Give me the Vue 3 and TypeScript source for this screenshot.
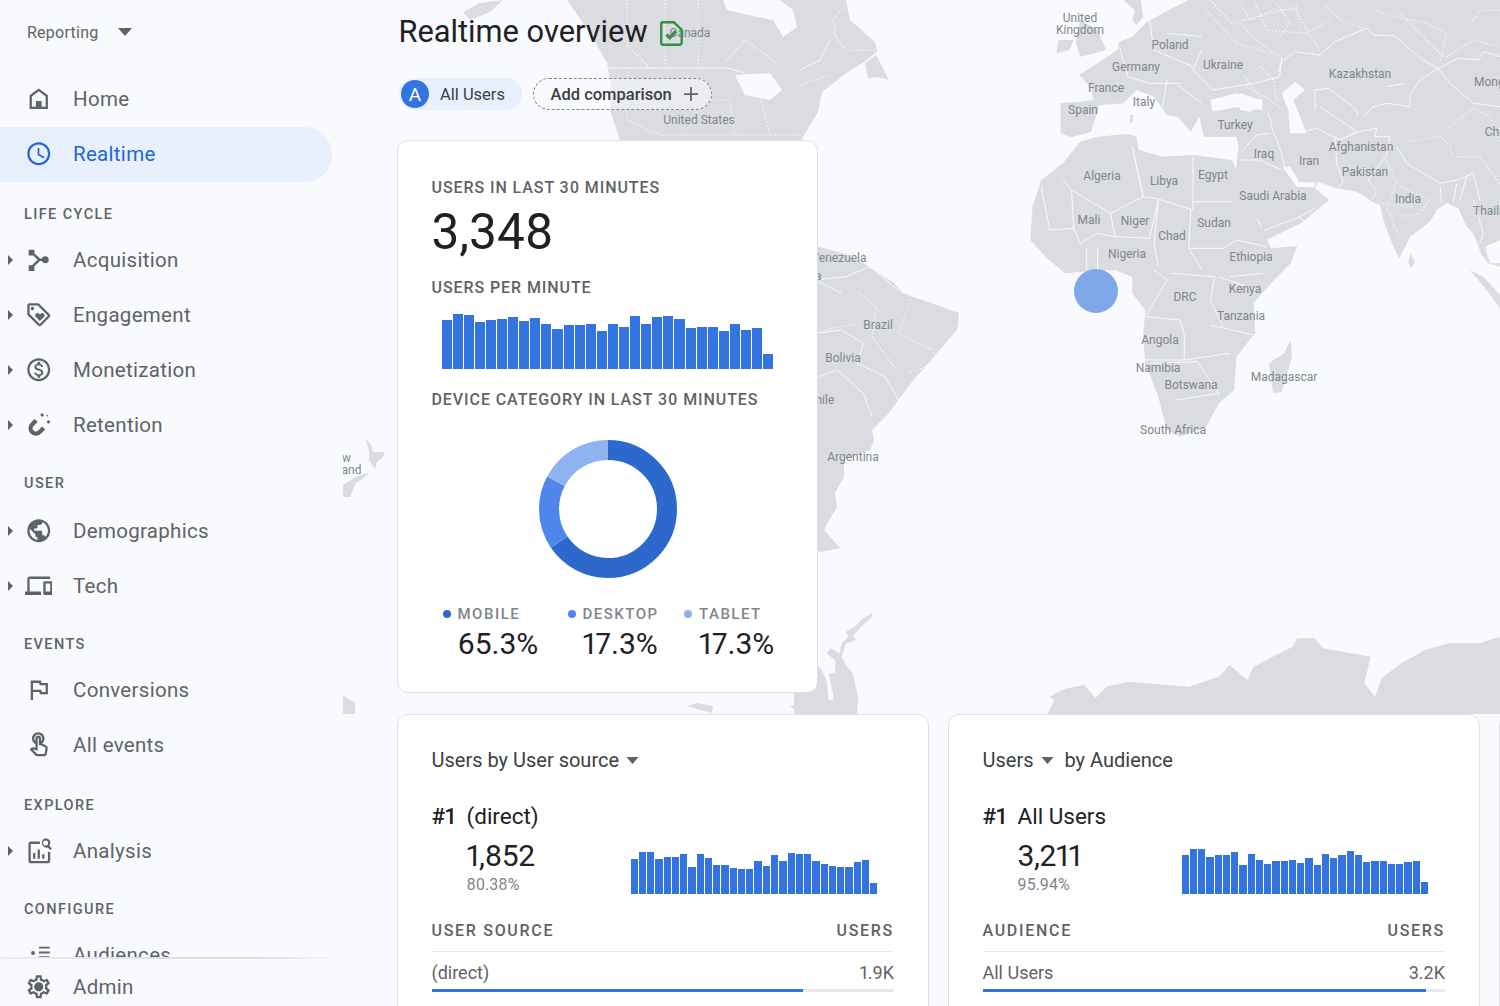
<script setup lang="ts">
type P = [number, number];
const z4 = (pts: P[]) => pts.map(([x, y]) => `${(x * 0.4337 + 477).toFixed(1)},${(y / 3).toFixed(1)}`).join(' ');
const z8 = (pts: P[]) => pts.map(([x, y]) => `${(x * 0.4337 + 477).toFixed(1)},${(y / 3 + 440).toFixed(1)}`).join(' ');
const z9 = (pts: P[]) => pts.map(([x, y]) => `${(x / 3 + 897).toFixed(1)},${(y / 3).toFixed(1)}`).join(' ');
const pg = (pts: P[]) => pts.map(([x, y]) => `${x - 343},${y}`).join(' ');

const land: string[] = [
  // North America
  pg([[567,0],[590,33],[607,63],[611,85],[610,110],[620,140],[640,190],[670,225],[705,262],[745,282],[768,262],[740,232],[745,212],[775,200],[795,170],[803,137],[818,112],[822,92],[848,72],[864,62],[877,52],[875,42],[850,20],[846,0],[780,0],[793,10],[797,27],[783,37],[773,20],[757,17],[727,10],[723,0]]),
  pg([[865,63],[876,55],[889,80],[878,77],[868,78]]),
  pg([[463,12],[480,3],[503,0],[490,12],[470,20]]),
  // South America
  pg([[790,250],[820,247],[842,253],[863,263],[894,283],[902,293],[928,302],[959,313],[957,330],[937,353],[911,383],[889,413],[872,430],[874,440],[870,450],[844,460],[844,477],[835,493],[837,507],[829,520],[824,530],[840,548],[820,552],[800,540],[790,450],[800,400],[770,320],[770,285]]),
  // Africa
  z4([[600,425],[640,410],[710,402],[730,410],[735,450],[790,470],[860,465],[950,480],[960,510],[985,600],[1020,690],[1040,745],[1100,738],[1085,790],[1040,850],[1000,910],[1003,1000],[960,1070],[955,1170],[920,1210],[890,1280],[830,1310],[800,1290],[780,1190],[750,1090],[745,1010],[750,930],[720,880],[720,830],[680,810],[610,815],[565,820],[520,770],[485,720],[490,620],[510,540],[560,490]]),
  // Eurasia
  z4([[555,310],[600,305],[630,300],[625,265],[598,225],[640,190],[685,150],[690,125],[720,110],[750,70],[790,40],[850,0]]) + ' ' +
    z9([[780,0],[780,800],[745,790],[725,765],[700,700],[680,680],[655,625],[620,610],[590,630],[570,665],[510,710],[478,775],[458,735],[430,660],[420,615],[395,605],[375,590],[350,575],[290,565],[235,545],[225,565],[268,600],[185,668],[75,722],[60,665],[15,615],[0,590]]) + ' ' +
    z4([[958,525],[965,440],[960,410],[885,410],[875,350],[855,395],[825,350],[800,345],[770,290],[730,270],[700,310],[645,315],[625,395],[580,412],[555,400]]),
  z4([[700,0],[740,0],[745,50],[730,75],[720,60],[725,30]]),
  z4([[600,60],[640,90],[660,150],[600,170],[590,130]]),
  z4([[550,120],[585,120],[575,150],[545,160]]),
  z4([[1085,1020],[1088,1070],[1065,1175],[1045,1180],[1035,1090],[1070,1060]]),
  z9([[512,760],[525,785],[515,803],[505,790]]),
  z9([[690,810],[730,830],[780,885],[780,925],[740,870]]),
  z4([[715,345],[722,345],[720,370],[714,368]]),
  // New Zealand
  pg([[365,438],[371,445],[373,452],[385,452],[382,458],[377,462],[375,469],[371,463],[369,460],[369,450]]),
  pg([[370,472],[361,480],[356,483],[350,497],[343,497],[343,485],[356,477]]),
  pg([[343,695],[355,703],[355,714],[343,714]]),
  // Antarctica
  z8([[525,822],[540,780],[530,770],[550,755],[570,745],[610,735],[635,775],[660,740],[710,725],[750,730],[850,740],[920,710],[945,675],[985,720],[1000,680],[1060,640],[1090,620],[1100,595],[1140,595],[1160,625],[1270,650],[1255,730],[1280,770],[1295,715],[1340,670],[1395,630],[1450,610],[1520,610],[1568,590],[1568,822]]),
  z8([[120,520],[100,535],[80,560],[60,575],[65,590],[50,610],[45,640],[25,625],[15,640],[35,660],[35,700],[20,700],[30,760],[32,822],[85,822],[88,770],[75,700],[60,675],[50,650],[60,610],[85,600],[75,590],[95,560],[120,530]]),
  z8([[-60,680],[0,680],[15,720],[20,780],[0,822],[-60,822]]),
  pg([[687,706],[697,703],[713,706],[712,713],[700,710]]),
  pg([[790,706],[812,700],[843,700],[843,714],[800,714]]),
];

const water: string[] = [
  z9([[0,280],[35,290],[60,320],[30,335],[0,330]]),
  z4([[900,300],[960,280],[1020,300],[1020,330],[960,322],[905,335]]),
  z9([[125,280],[165,245],[195,270],[160,300],[200,400],[150,400],[145,330]]),
  z9([[130,505],[150,498],[178,545],[228,548],[222,562],[170,560]]),
  z9([[735,740],[780,720],[780,790],[750,790]]),
  pg([[735,75],[770,73],[782,90],[770,100],[745,95]]),
];

const lines: string[] = [
  z4([[560,540],[580,570],[670,640],[745,590],[720,440]]),
  z4([[725,470],[745,590],[775,595],[860,630],[860,470]]),
  z4([[860,605],[950,605]]),
  z4([[855,630],[850,745],[880,810]]),
  z4([[580,570],[585,685],[530,690],[510,560]]),
  z4([[670,640],[680,710],[760,715],[780,600]]),
  z4([[780,600],[770,730],[780,800]]),
  z4([[585,685],[600,730],[640,700],[680,710]]),
  z4([[810,820],[910,830],[900,900],[930,980]]),
  z4([[770,810],[800,840],[750,950]]),
  z4([[750,950],[830,960],[840,1005],[840,1080],[750,1080]]),
  z4([[920,830],[1005,870]]),
  z4([[900,975],[1000,1005]]),
  z4([[850,745],[930,745],[960,720],[1030,740]]),
  z4([[945,830],[1020,820]]),
  z4([[760,1090],[870,1085],[920,1180],[820,1200]]),
  z4([[840,1080],[945,1060]]),
  z4([[615,745],[615,810]]), z4([[640,745],[640,810]]),
  z4([[880,150],[860,210],[905,270],[1000,250],[1060,230],[1065,170]]),
  z4([[760,60],[770,150],[860,200]]),
  z4([[690,140],[710,230],[760,250],[830,250]]),
  z4([[800,100],[880,110]]),
  z4([[800,240],[790,320]]),
  z4([[825,255],[880,310]]),
  // Central Asia and the Middle East
  z9([[115,215],[125,185],[165,155],[240,165],[285,125],[380,85],[400,105],[465,108],[540,175],[595,205],[540,240],[510,285],[510,320],[440,310],[400,320],[370,350]]),
  z9([[225,330],[225,270],[265,265],[340,320],[355,345]]),
  z9([[240,320],[350,395],[300,420],[230,385],[190,395]]),
  z9([[595,205],[655,175],[715,180],[730,155],[780,170]]),
  z9([[595,205],[630,250],[700,310],[780,320]]),
  z9([[90,370],[125,460],[135,510]]),
  z9([[85,340],[95,370]]),
  z9([[285,410],[290,490],[310,545],[295,565]]),
  z9([[300,420],[355,395],[410,385],[405,410],[450,410],[440,465],[385,540],[410,575],[395,600]]),
  z9([[0,460],[50,405],[90,400]]),
  z9([[0,480],[60,480],[125,510]]),
  z9([[75,690],[180,650],[195,670]]),
  z9([[180,650],[225,625]]),
  z9([[470,440],[500,490],[600,550],[650,540],[700,520],[720,600]]),
  z9([[600,560],[605,610]]),
  z9([[650,550],[640,610]]),
  z9([[680,530],[660,600]]),
  z9([[700,600],[730,700],[720,730]]),
  z9([[440,260],[495,250]]),
  // Americas
  z4([[50,880],[-10,840],[60,830],[115,800],[180,870]]),
  z4([[-10,1000],[50,990],[100,1030],[85,1090],[150,1130],[190,1220]]),
  z4([[0,1130],[40,1110],[100,1180],[120,1250]]),
  pg([[607,68],[727,68],[745,73]]),
  pg([[800,70],[820,60],[830,40]]),
];

const dots: string[] = [
  pg([[627,0],[627,45],[650,68]]),
  pg([[665,0],[665,68]]), pg([[698,0],[698,68]]),
  pg([[725,62],[745,40],[775,62]]),
  pg([[627,68],[627,120],[660,135],[800,135]]),
  pg([[665,100],[730,100],[735,135]]),
  pg([[760,95],[770,135]]),
  pg([[800,85],[830,75]]),
  z4([[30,100],[60,150],[130,150]]),
  z4([[60,10],[30,60],[40,130]]),
  z4([[890,30],[960,130],[1040,160]]),
  z4([[980,230],[1020,300]]),
  z4([[90,880],[130,920],[120,1010],[170,1100]]),
  z4([[210,900],[180,1000],[260,1050],[270,1090],[200,1120]]),
  z4([[10,990],[90,970]]),
  z4([[900,0],[950,70],[1010,50],[1100,20]]),
  z4([[1000,0],[1030,90],[1120,100],[1180,60]]),
  z9([[0,70],[60,130],[120,170]]),
  z9([[170,30],[200,90],[240,150]]),
  z9([[260,20],[300,60],[370,85]]),
  z9([[400,30],[470,50],[560,70],[620,100],[600,190]]),
  z9([[700,60],[720,30],[780,30]]),
  z9([[620,170],[700,120],[780,140]]),
  z9([[495,425],[600,410],[630,440],[640,470],[720,470],[750,510],[780,550]]),
  z9([[630,380],[700,325],[750,350],[780,430]]),
  z9([[440,480],[470,550],[440,620],[480,720]]),
  z9([[480,560],[570,600],[540,640],[480,650]]),
  z9([[420,610],[520,620]]),
  z9([[0,10],[30,60],[100,30],[170,30],[180,80]]),
  z9([[60,200],[100,240],[110,300]]),
  z9([[20,260],[90,300],[130,330]]),
  z9([[110,10],[150,70],[120,110]]),
  z9([[480,40],[560,120],[610,170]]),
];

const labels: { t: string; x: number; y: number }[] = [
  { t: 'Canada', x: 690, y: 33 }, { t: 'United States', x: 699, y: 120 }, { t: 'Mexico', x: 695, y: 194 },
  { t: 'Venezuela', x: 839, y: 258 }, { t: 'Colombia', x: 796, y: 276 }, { t: 'Peru', x: 797, y: 334 },
  { t: 'Brazil', x: 878, y: 325 }, { t: 'Bolivia', x: 843, y: 358 }, { t: 'Chile', x: 821, y: 400 },
  { t: 'Argentina', x: 853, y: 457 }, { t: 'United', x: 1080, y: 18 }, { t: 'Kingdom', x: 1080, y: 30 },
  { t: 'Poland', x: 1170, y: 45 }, { t: 'Germany', x: 1136, y: 67 }, { t: 'Ukraine', x: 1223, y: 65 },
  { t: 'Kazakhstan', x: 1360, y: 74 }, { t: 'France', x: 1106, y: 88 }, { t: 'Italy', x: 1144, y: 102 },
  { t: 'Spain', x: 1083, y: 110 }, { t: 'Turkey', x: 1235, y: 125 }, { t: 'Iraq', x: 1264, y: 154 },
  { t: 'Iran', x: 1309, y: 161 }, { t: 'Afghanistan', x: 1361, y: 147 }, { t: 'Pakistan', x: 1365, y: 172 },
  { t: 'Algeria', x: 1102, y: 176 }, { t: 'Libya', x: 1164, y: 181 }, { t: 'Egypt', x: 1213, y: 175 },
  { t: 'Saudi Arabia', x: 1273, y: 196 }, { t: 'India', x: 1408, y: 199 }, { t: 'Thailand', x: 1496, y: 211 },
  { t: 'Mali', x: 1089, y: 220 }, { t: 'Niger', x: 1135, y: 221 }, { t: 'Chad', x: 1172, y: 236 },
  { t: 'Sudan', x: 1214, y: 223 }, { t: 'Nigeria', x: 1127, y: 254 }, { t: 'Ethiopia', x: 1251, y: 257 },
  { t: 'Kenya', x: 1245, y: 289 }, { t: 'DRC', x: 1185, y: 297 }, { t: 'Tanzania', x: 1241, y: 316 },
  { t: 'Angola', x: 1160, y: 340 }, { t: 'Namibia', x: 1158, y: 368 }, { t: 'Botswana', x: 1191, y: 385 },
  { t: 'Madagascar', x: 1284, y: 377 }, { t: 'South Africa', x: 1173, y: 430 }, { t: 'Mongolia', x: 1499, y: 82 },
  { t: 'China', x: 1500, y: 132 }, { t: 'New', x: 339, y: 458 }, { t: 'Zealand', x: 340, y: 470 },
];

type NavItem = { label: string; path: string; caret?: boolean; active?: boolean };
type Section = { title?: string; kind?: string; items: NavItem[] };

const P = {
  home: 'M12 3L4 9v12h16V9l-8-6zm6 16H6v-9l6-4.500 6 4.500v9zM9.500 14h5v5h-5z',
  clock: 'M11.99 2C6.47 2 2 6.48 2 12s4.47 10 9.99 10C17.52 22 22 17.52 22 12S17.52 2 11.99 2zM12 20c-4.42 0-8-3.58-8-8s3.58-8 8-8 8 3.58 8 8-3.58 8-8 8zm.5-13H11v6l5.25 3.15.75-1.23-4.5-2.67z',
  acq: 'M3.2 3.2h5v5h-5zM3.2 16.8h5v5h-5zM17.7 9a3 3 0 1 1 0 6 3 3 0 0 1 0-6zM6.9 5.2l6.2 5.8h3.4v2h-3.4l-6.2 5.8-1.3-1.5 5.4-5.3-5.4-5.3z',
  eng: 'M21.41 11.41l-8.83-8.83C12.21 2.21 11.7 2 11.17 2H4c-1.1 0-2 .9-2 2v7.17c0 .53.21 1.04.59 1.41l8.83 8.83c.78.78 2.05.78 2.83 0l7.17-7.17c.78-.78.78-2.04-.01-2.83zM12.83 20L4 11.17V4h7.17L20 12.83 12.83 20zM6.5 5a1.5 1.5 0 1 0 0 3 1.5 1.5 0 0 0 0-3zM8.9 12.55c0 .57.23 1.07.6 1.45l3.5 3.5 3.5-3.5c.37-.37.6-.89.6-1.45 0-1.13-.92-2.05-2.05-2.05-.57 0-1.08.23-1.45.6l-.6.6-.6-.59c-.37-.38-.89-.61-1.45-.61-1.13 0-2.05.92-2.05 2.05z',
  mon: 'M12 2C6.48 2 2 6.48 2 12s4.48 10 10 10 10-4.48 10-10S17.52 2 12 2zm0 18c-4.41 0-8-3.59-8-8s3.59-8 8-8 8 3.59 8 8-3.59 8-8 8zm.31-8.86c-1.77-.45-2.34-.94-2.34-1.67 0-.84.79-1.43 2.1-1.43 1.38 0 1.9.66 1.94 1.64h1.71c-.05-1.34-.87-2.57-2.49-2.97V5H10.9v1.69c-1.51.32-2.72 1.3-2.72 2.81 0 1.79 1.49 2.69 3.66 3.21 1.95.46 2.34 1.15 2.34 1.87 0 .53-.39 1.39-2.1 1.39-1.6 0-2.23-.72-2.32-1.64H8.04c.1 1.7 1.36 2.66 2.86 2.97V19h2.34v-1.67c1.52-.29 2.72-1.16 2.73-2.77-.01-2.2-1.9-2.96-3.66-3.42z',
  ret: 'M8.4 6.9L4.9 10.4A6.5 6.5 0 0 0 14.1 19.6L17.6 16.1 15 13.5 11.5 17A2.8 2.8 0 0 1 7.5 13L11 9.500zM15 1.800l1.700 1.700-1.700 1.700-1.700-1.700zM20.500 7.800l1.700 1.700-1.700 1.700-1.700-1.700zM19.300 3.200l.9.900-.9.900-.9-.900z',
  demo: 'M12 2C6.48 2 2 6.48 2 12s4.48 10 10 10 10-4.48 10-10S17.52 2 12 2zm-1 17.93c-3.95-.49-7-3.85-7-7.93 0-.62.08-1.21.21-1.79L9 15v1c0 1.1.9 2 2 2v1.93zm6.9-2.54c-.26-.81-1-1.39-1.9-1.39h-1v-3c0-.55-.45-1-1-1H8v-2h2c.55 0 1-.45 1-1V7h2c1.1 0 2-.9 2-2v-.41c2.93 1.19 5 4.06 5 7.41 0 2.08-.8 3.97-2.1 5.39z',
  tech: 'M4 6h18V4H4c-1.1 0-2 .9-2 2v11H0v3h14v-3H4V6zm19 2h-6c-.55 0-1 .45-1 1v10c0 .55.45 1 1 1h6c.55 0 1-.45 1-1V9c0-.55-.45-1-1-1zm-1 9h-4v-7h4v7z',
  flag: 'M12.36 6l.4 2H18v6h-3.36l-.4-2H7V6h5.36M14 4H5v17h2v-7h5.6l.4 2h7V6h-5.6L14 4z',
  touch: 'M18.19 12.44l-3.24-1.62c1.29-1 2.12-2.56 2.12-4.32 0-3.03-2.47-5.5-5.5-5.5s-5.5 2.47-5.5 5.5c0 2.13 1.22 3.98 3 4.89v3.26c-2.15-.46-2.02-.44-2.26-.44-.53 0-1.03.21-1.41.59L4 16.22l5.09 5.09C9.52 21.75 10.12 22 10.74 22h6.3c.98 0 1.81-.7 1.97-1.67l.8-4.71c.22-1.3-.43-2.58-1.62-3.18zm-.35 2.85l-.8 4.71h-6.3c-.09 0-.17-.04-.24-.1l-3.68-3.68 4.25.89V6.5c0-.28.22-.5.5-.5s.5.22.5.5v6h1.76l3.46 1.73c.4.2.62.63.55 1.06zM8.07 6.5c0-1.93 1.57-3.5 3.5-3.5s3.5 1.57 3.5 3.5c0 .95-.38 1.81-1 2.44V6.5c0-1.38-1.12-2.5-2.5-2.5s-2.5 1.12-2.5 2.5v2.44c-.62-.63-1-1.49-1-2.44z',
  analysis: 'M13 4H5a2 2 0 0 0-2 2v15a2 2 0 0 0 2 2h15a2 2 0 0 0 2-2v-8h-2v8H5V6h8zM7 14h2v5H7zM11 11h2v8h-2zM15 15h2v4h-2zM18 1a4.2 4.2 0 0 1 3.3 6.8l2.2 2.2-1.4 1.4-2.2-2.2A4.2 4.2 0 1 1 18 1zm0 2a2.2 2.2 0 1 0 0 4.4A2.2 2.2 0 0 0 18 3z',
  aud: 'M7 8.800a1.700 1.700 0 1 1 0 3.400 1.700 1.700 0 0 1 0-3.400zM12.200 5h9.400v1.600h-9.400zM12.200 9.200h9.400v1.600h-9.400zM12.200 13.400h9.400v1.600h-9.400z',
  gear: 'M19.43 12.98c.04-.32.07-.64.07-.98 0-.34-.03-.66-.07-.98l2.11-1.65c.19-.15.24-.42.12-.64l-2-3.46c-.09-.16-.26-.25-.44-.25-.06 0-.12.01-.17.03l-2.49 1c-.52-.4-1.08-.73-1.69-.98l-.38-2.65C14.46 2.18 14.25 2 14 2h-4c-.25 0-.46.18-.49.42l-.38 2.65c-.61.25-1.17.59-1.69.98l-2.49-1c-.06-.02-.12-.03-.18-.03-.17 0-.34.09-.43.25l-2 3.46c-.13.22-.07.49.12.64l2.11 1.65c-.04.32-.07.65-.07.98 0 .33.03.66.07.98l-2.11 1.65c-.19.15-.24.42-.12.64l2 3.46c.09.16.26.25.44.25.06 0 .12-.01.17-.03l2.49-1c.52.4 1.08.73 1.69.98l.38 2.65c.03.24.24.42.49.42h4c.25 0 .46-.18.49-.42l.38-2.65c.61-.25 1.17-.59 1.69-.98l2.49 1c.06.02.12.03.18.03.17 0 .34-.09.43-.25l2-3.46c.12-.22.07-.49-.12-.64l-2.11-1.65zm-1.98-1.71c.04.31.05.52.05.73 0 .21-.02.43-.05.73l-.14 1.13.89.7 1.08.84-.7 1.21-1.27-.51-1.04-.42-.9.68c-.43.32-.84.56-1.25.73l-1.06.43-.16 1.13-.2 1.35h-1.4l-.19-1.35-.16-1.13-1.06-.43c-.43-.18-.83-.41-1.23-.71l-.91-.7-1.06.43-1.27.51-.7-1.21 1.08-.84.89-.7-.14-1.13c-.03-.31-.05-.54-.05-.74s.02-.43.05-.73l.14-1.13-.89-.7-1.08-.84.7-1.21 1.27.51 1.04.42.9-.68c.43-.32.84-.56 1.25-.73l1.06-.43.16-1.13.2-1.35h1.39l.19 1.35.16 1.13 1.06.43c.43.18.83.41 1.23.71l.91.7 1.06-.43 1.27-.51.7 1.21-1.07.85-.89.7.14 1.13zM12 8c-2.21 0-4 1.79-4 4s1.79 4 4 4 4-1.79 4-4-1.79-4-4-4z',
};

const sections: Section[] = [
  { items: [{ label: 'Home', path: P.home }, { label: 'Realtime', path: P.clock, active: true }] },
  { title: 'LIFE CYCLE', kind: 'h-a', items: [
    { label: 'Acquisition', path: P.acq, caret: true }, { label: 'Engagement', path: P.eng, caret: true },
    { label: 'Monetization', path: P.mon, caret: true }, { label: 'Retention', path: P.ret, caret: true } ] },
  { title: 'USER', kind: 'h-b', items: [{ label: 'Demographics', path: P.demo, caret: true }, { label: 'Tech', path: P.tech, caret: true }] },
  { title: 'EVENTS', kind: 'h-c', items: [{ label: 'Conversions', path: P.flag }, { label: 'All events', path: P.touch }] },
  { title: 'EXPLORE', kind: 'h-a', items: [{ label: 'Analysis', path: P.analysis, caret: true }] },
  { title: 'CONFIGURE', kind: 'h-c', items: [{ label: 'Audiences', path: P.aud }] },
];

const minuteBars = [49,55,54,47,49,50,52,48,51,45,40,44,44,45,38,45,42,53,45,52,53,50,41,42,42,38,45,39,41,15];

const C = 2 * Math.PI * 59;
const donut = [
  { color: '#2d69cd', pct: 65.4, from: 0 },
  { color: '#4f86ec', pct: 17.3, from: 65.4 },
  { color: '#8fb2f1', pct: 17.3, from: 82.7 },
];
const legend = [
  { name: 'MOBILE', value: '65.3%', color: '#2d69cd' },
  { name: 'DESKTOP', value: '17.3%', color: '#4f86ec' },
  { name: 'TABLET', value: '17.3%', color: '#8fb2f1' },
];

const cards = [
  { kind: 'source', rank: '(direct)', value: '1,852', pct: '80.38%', col: 'USER SOURCE', row: '(direct)', short: '1.9K', fill: 80.3,
    width: 247,
    bars: [35,42,42,35,37,37,40,27,40,36,29,29,26,25,25,33,28,39,33,41,40,40,33,30,28,27,27,32,34,11] },
  { kind: 'audience', rank: 'All Users', value: '3,211', pct: '95.94%', col: 'AUDIENCE', row: 'All Users', short: '3.2K', fill: 95.9,
    width: 246.5,
    bars: [39,45,45,37,39,39,42,29,40,34,30,33,33,34,31,36,29,40,36,39,43,39,32,33,33,30,30,32,33,12] },
];
</script>

<template>
  <div class="app">
    <aside class="sidebar">
      <div class="reporting">
        <span>Reporting</span>
        <svg class="rep-caret" viewBox="0 0 14 8"><path d="M0 0h14L7 8z" /></svg>
      </div>
      <div class="nav">
        <template v-for="s in sections" :key="s.title ?? 'top'">
          <div v-if="s.title" class="heading" :class="s.kind"><span>{{ s.title }}</span></div>
          <div v-for="i in s.items" :key="i.label" class="item" :class="{ active: i.active }">
            <span class="slot">
              <svg v-if="i.caret" class="expand" viewBox="0 0 5 10"><path d="M0 0l5 5-5 5z" /></svg>
            </span>
            <svg class="icon" viewBox="0 0 24 24"><path :d="i.path" /></svg>
            <span class="text">{{ i.label }}</span>
          </div>
        </template>
      </div>
      <div class="foot">
        <div class="item">
          <span class="slot"></span>
          <svg class="icon" viewBox="0 0 24 24"><path :d="P.gear" /><circle cx="12" cy="12" r="2.4" /></svg>
          <span class="text">Admin</span>
        </div>
      </div>
    </aside>

    <main class="main">
      <svg class="map" viewBox="0 0 1157 714">
        <polygon v-for="(p, i) in land" :key="'l' + i" :points="p" class="land" />
        <polygon v-for="(p, i) in water" :key="'w' + i" :points="p" class="water" />
        <polyline v-for="(p, i) in lines" :key="'b' + i" :points="p" class="border" />
        <polyline v-for="(p, i) in dots" :key="'d' + i" :points="p" class="dot-line" />
        <text v-for="l in labels" :key="l.t" :x="l.x - 343" :y="l.y + 4" class="map-label">{{ l.t }}</text>
        <circle cx="753" cy="291" r="22" class="bubble" />
      </svg>

      <div class="content">
        <div class="title-row">
          <h1>Realtime overview</h1>
          <svg class="doc" viewBox="0 0 23 25">
            <path d="M2.500 1.200h11.300l7.900 7.600v12.500a2.500 2.500 0 0 1-2.500 2.500H2.500A1.500 1.500 0 0 1 1.200 22.300V2.700A1.500 1.500 0 0 1 2.500 1.200z" fill="none" stroke="#2f9246" stroke-width="2.400" />
            <path d="M6.500 13.500l3.200 3.200 6.300-6.500" fill="none" stroke="#2f9246" stroke-width="3.200" />
          </svg>
        </div>
        <div class="chips">
          <div class="chip-user">
            <span class="avatar">A</span>
            <span>All Users</span>
          </div>
          <div class="chip-add">
            <span>Add comparison</span>
            <svg viewBox="0 0 16 16"><path d="M7 0h2v7h7v2H9v7H7V9H0V7h7z" /></svg>
          </div>
        </div>

        <section class="card overview">
          <div class="label">USERS IN LAST 30 MINUTES</div>
          <div class="big">3,348</div>
          <div class="label per-minute">USERS PER MINUTE</div>
          <div class="minute-bars">
            <span v-for="(b, i) in minuteBars" :key="i" :style="{ height: b + 'px' }"></span>
          </div>
          <div class="label device">DEVICE CATEGORY IN LAST 30 MINUTES</div>
          <svg class="donut" viewBox="0 0 140 140">
            <circle
              v-for="d in donut" :key="d.color" cx="70" cy="70" r="59" fill="none" stroke-width="20"
              :stroke="d.color"
              :stroke-dasharray="`${(d.pct / 100) * C} ${C}`"
              :stroke-dashoffset="`${-(d.from / 100) * C}`"
              transform="rotate(-90 70 70)"
            />
          </svg>
          <div class="legend">
            <div v-for="l in legend" :key="l.name" class="legend-col">
              <div class="legend-name"><i :style="{ background: l.color }"></i>{{ l.name }}</div>
              <div class="legend-value">{{ l.value }}</div>
            </div>
          </div>
        </section>

        <div class="row">
          <section v-for="c in cards" :key="c.kind" class="card detail">
            <div v-if="c.kind === 'source'" class="detail-title">
              <span>Users by User source</span>
              <svg class="mini-caret" viewBox="0 0 14 8"><path d="M0 0h14L7 8z" /></svg>
            </div>
            <div v-else class="detail-title">
              <span>Users</span>
              <svg class="mini-caret" viewBox="0 0 14 8"><path d="M0 0h14L7 8z" /></svg>
              <span class="by">by Audience</span>
            </div>
            <div class="rank"><span class="num">#1</span><span>{{ c.rank }}</span></div>
            <div class="stat">
              <div class="stat-left">
                <div class="stat-value">{{ c.value }}</div>
                <div class="stat-pct">{{ c.pct }}</div>
              </div>
              <div class="spark" :style="{ width: c.width + 'px' }">
                <span v-for="(b, i) in c.bars" :key="i" :style="{ height: b + 'px' }"></span>
              </div>
            </div>
            <div class="table-head"><span>{{ c.col }}</span><span>USERS</span></div>
            <div class="table-row"><span>{{ c.row }}</span><span>{{ c.short }}</span></div>
            <div class="track"><div class="fill" :style="{ width: c.fill + '%' }"></div></div>
          </section>
          <section class="card sliver"></section>
        </div>
      </div>
    </main>
  </div>
</template>

<style>
html, body { margin: 0; background: #f8fafd; }
</style>

<style scoped>
.app {
  display: flex;
  width: 1500px;
  height: 1006px;
  overflow: hidden;
  background: #f8fafd;
  font-family: Roboto, "Liberation Sans", sans-serif;
  color: #5f6368;
  font-variant-numeric: proportional-nums;
}
.sidebar {
  flex: none;
  width: 343px;
  height: 1006px;
  display: flex;
  flex-direction: column;
  position: relative;
  z-index: 2;
  background: #f8fafd;
}
.reporting {
  flex: none;
  height: 71.5px;
  padding: 0 0 7.5px 27px;
  box-sizing: border-box;
  display: flex;
  align-items: center;
  font-size: 16px;
  letter-spacing: .25px;
  color: #5f6368;
}
.rep-caret { width: 14px; height: 8px; margin-left: 20px; fill: #5f6368; }
.nav { flex: none; height: 886.5px; overflow: hidden; }
.heading {
  box-sizing: border-box;
  padding-left: 24px;
  font-size: 14.5px;
  line-height: 20px;
  font-weight: 500;
  letter-spacing: 1.4px;
  color: #5f6368;
}
.h-a { height: 51px; padding-top: 23px; }
.h-b { height: 51px; padding-top: 21px; }
.h-c { height: 49px; padding-top: 21px; }
.item {
  height: 55px;
  display: flex;
  align-items: center;
  width: 332px;
  box-sizing: border-box;
  color: #5f6368;
}
.item.active {
  background: #e8f0fe;
  border-radius: 0 28px 28px 0;
  color: #1f66d8;
}
.slot { width: 24.5px; flex: none; display: flex; padding-left: 8px; box-sizing: border-box; }
.expand { width: 5px; height: 10px; fill: #5f6368; }
.icon { width: 27.5px; height: 27.5px; flex: none; fill: currentColor; }
.text {
  margin-left: 21px;
  font-size: 20.5px;
  letter-spacing: .3px;
}
.foot {
  flex: 1;
  background: #f8fafd;
  position: relative;
}
.foot::before {
  content: "";
  position: absolute;
  left: 0;
  right: 0;
  top: -1px;
  height: 2px;
  background: linear-gradient(90deg, #eceef1 0%, #dcdee2 50%, #dcdee2 75%, rgba(220, 222, 226, 0) 100%);
}
.foot .item { height: 48px; margin-top: 5px; }

.main { position: relative; flex: none; width: 1157px; height: 1006px; overflow: hidden; }
.map { position: absolute; left: 0; top: 0; width: 1157px; height: 714px; }
.land { fill: #dadce0; }
.water { fill: #f8fafd; }
.border { fill: none; stroke: #f8fafd; stroke-width: 1; stroke-linejoin: round; }
.dot-line { fill: none; stroke: #f8fafd; stroke-width: 1.2; stroke-linecap: round; stroke-dasharray: .5 3; }
.map-label {
  font-family: Roboto, sans-serif;
  font-size: 12px;
  fill: #80868b;
  text-anchor: middle;
}
.bubble { fill: #7fa7ea; }

.content { position: relative; padding-left: 54px; }
.title-row { height: 62px; display: flex; align-items: center; }
h1 {
  margin: 0 0 0 1.5px;
  font-size: 30.8px;
  font-weight: 400;
  color: #202124;
  letter-spacing: 0;
}
.doc { width: 23px; height: 25px; margin: 5px 0 0 12px; }
.chips { display: flex; margin-top: 16px; height: 32px; font-size: 16.5px; color: #3c4043; }
.chip-user {
  width: 123px;
  margin-left: 2px;
  box-sizing: border-box;
  height: 32px;
  background: #e8f0fe;
  border-radius: 16px;
  display: flex;
  align-items: center;
  padding-left: 2px;
  color: #3c4043;
}
.avatar {
  width: 28px;
  height: 28px;
  border-radius: 50%;
  background: #3374e0;
  color: #fff;
  font-size: 19px;
  display: flex;
  align-items: center;
  justify-content: center;
  margin-right: 11px;
}
.chip-add {
  margin-left: 11px;
  width: 179px;
  height: 32px;
  box-sizing: border-box;
  border: 1.5px dashed #80868b;
  border-radius: 16px;
  display: flex;
  align-items: center;
  padding-left: 16.5px;
  font-size: 16.5px;
  font-weight: 500;
  color: #3c4043;
  background: rgba(248, 250, 253, .55);
}
.chip-add svg { width: 14px; height: 14px; margin-left: 12px; fill: #5f6368; }

.card {
  box-sizing: border-box;
  background: rgba(255, 255, 255, .965);
  border: 1.5px solid #dfe1e5;
  border-radius: 11px;
}
.overview {
  margin-top: 30px;
  width: 421px;
  height: 553px;
  padding: 36.5px 33.5px 0;
  display: flex;
  flex-direction: column;
}
.label {
  font-size: 16px;
  line-height: 20px;
  font-weight: 500;
  letter-spacing: .92px;
  color: #5f6368;
  white-space: nowrap;
}
.big { font-size: 49.5px; line-height: 56px; margin-top: 6px; color: #202124; }
.per-minute { margin-top: 18px; }
.minute-bars {
  margin: 16px 0 0 10px;
  width: 332px;
  height: 55px;
  display: flex;
  align-items: flex-end;
  gap: 1px;
  flex: none;
}
.minute-bars span { flex: 1; background: #3374e0; }
.device { margin-top: 21px; }
.donut { width: 140px; height: 140px; margin-top: 29px; align-self: center; flex: none; }
.legend {
  display: grid;
  grid-template-columns: 125px 116.5px auto;
  margin: 25px 0 0 11px;
}
.legend-name {
  display: flex;
  align-items: center;
  font-size: 15px;
  line-height: 20px;
  letter-spacing: 1.5px;
  font-weight: 500;
  color: #80868b;
}
.legend-name i { width: 8px; height: 8px; border-radius: 50%; margin-right: 7px; }
.legend-value { padding-left: 15px; font-size: 30px; line-height: 40px; color: #202124; white-space: nowrap; }

.row { display: flex; margin-top: 21px; gap: 19.5px; }
.detail { flex: none; width: 531.5px; height: 330px; padding: 34px 33.5px 0; }
.sliver { flex: none; width: 100px; height: 330px; }
.detail-title {
  display: flex;
  align-items: center;
  height: 22px;
  font-size: 20px;
  color: #3c4043;
}
.mini-caret { width: 13px; height: 7px; margin-left: 7px; fill: #5f6368; }
.by { margin-left: 11px; }
.rank {
  display: flex;
  margin-top: 31.5px;
  font-size: 22.5px;
  line-height: 26px;
  color: #202124;
}
.num { font-weight: 500; width: 35px; }
.stat { display: flex; align-items: flex-end; margin-top: 9px; }
.stat-left { width: 199px; flex: none; padding-left: 35px; box-sizing: border-box; margin-bottom: -1px; }
.stat-value { font-size: 30px; line-height: 36px; letter-spacing: -.4px; color: #202124; }
.stat-pct { font-size: 16px; line-height: 20px; margin-top: 1px; color: #80868b; }
.spark { display: flex; align-items: flex-end; gap: 1px; height: 45px; }
.spark span { flex: 1; background: #3374e0; }
.table-head {
  display: flex;
  justify-content: space-between;
  margin-top: 27px;
  padding-bottom: 10px;
  border-bottom: 1px solid #e8eaed;
  font-size: 16px;
  line-height: 20px;
  font-weight: 500;
  letter-spacing: 1.7px;
  color: #5f6368;
}
.table-row {
  display: flex;
  justify-content: space-between;
  margin-top: 10px;
  font-size: 18px;
  line-height: 22px;
  color: #5f6368;
}
.track { margin-top: 5px; height: 3px; background: #e8eaed; }
.fill { height: 100%; background: #3374e0; }
</style>
